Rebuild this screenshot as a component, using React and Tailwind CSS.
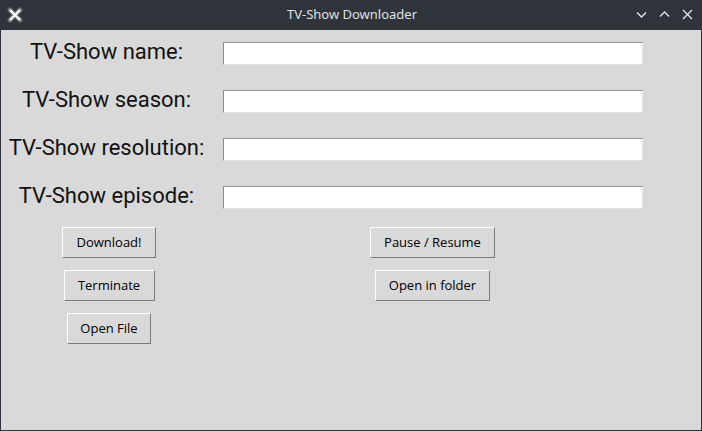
import React from "react";

const labels = ["TV-Show name:", "TV-Show season:", "TV-Show resolution:", "TV-Show episode:"];

function TkButton({ children, width }) {
  return (
    <button
      className={`h-[31px] ${width} border-t border-l border-t-white border-l-white border-b border-r border-b-[#7b7b7b] border-r-[#7b7b7b] bg-[#d9d9d9] text-[13px] text-black`}
      style={{ fontFamily: '"Open Sans", "Noto Sans", sans-serif' }}
    >
      {children}
    </button>
  );
}

export default function App() {
  return (
    <div className="w-[702px] h-[431px] bg-[#2f343a] flex flex-col overflow-hidden">
      {/* title bar */}
      <div className="h-[30px] flex items-center relative shrink-0">
        <svg className="absolute left-[7px] top-[7px]" width="16" height="16" viewBox="0 0 16 16">
          <path d="M3 3 L13 13 M13 3 L3 13" stroke="#6b7075" strokeWidth="5" strokeLinecap="round" />
          <path d="M3.5 3.5 L12.5 12.5 M12.5 3.5 L3.5 12.5" stroke="#ffffff" strokeWidth="2.4" strokeLinecap="round" />
        </svg>
        <div
          className="flex-1 text-center text-[13px] text-[#dfe1e3] pl-[2px]"
          style={{ fontFamily: '"Noto Sans", "Open Sans", sans-serif' }}
        >
          TV-Show Downloader
        </div>
        <div className="absolute right-[9px] top-[9px] flex items-center gap-[12px]">
          <svg width="11" height="11" viewBox="0 0 11 11">
            <path d="M1 3.5 L5.5 8 L10 3.5" stroke="#e6e6e6" strokeWidth="1.3" fill="none" />
          </svg>
          <svg width="11" height="11" viewBox="0 0 11 11">
            <path d="M1 7.5 L5.5 3 L10 7.5" stroke="#e6e6e6" strokeWidth="1.3" fill="none" />
          </svg>
          <svg width="11" height="11" viewBox="0 0 11 11">
            <path d="M1 1 L10 10 M10 1 L1 10" stroke="#e6e6e6" strokeWidth="1.3" fill="none" />
          </svg>
        </div>
      </div>

      {/* body */}
      <div className="flex-1 mx-[1px] mb-[1px] bg-[#d9d9d9] pt-[12px]">
        <div className="flex flex-col gap-[25px]">
          {labels.map((l) => (
            <div key={l} className="flex items-center h-[23px]">
              <div
                className="w-[211px] text-center text-[22px] leading-[23px] text-[#111] -mt-[4px]"
                style={{ fontFamily: "Roboto, sans-serif" }}
              >
                {l}
              </div>
              <input
                className="ml-[11px] w-[420px] h-[23px] bg-white border-t border-l border-t-[#8e8e8e] border-l-[#8e8e8e] border-b border-r border-b-[#e3e3e3] border-r-[#e3e3e3] outline-none"
              />
            </div>
          ))}
        </div>

        <div className="grid grid-cols-[216px_431px] justify-items-center gap-y-[12px] mt-[18px]">
          <TkButton width="w-[94px]">Download!</TkButton>
          <TkButton width="w-[125px]">Pause / Resume</TkButton>
          <TkButton width="w-[91px]">Terminate</TkButton>
          <TkButton width="w-[115px]">Open in folder</TkButton>
          <TkButton width="w-[84px]">Open File</TkButton>
        </div>
      </div>
    </div>
  );
}
